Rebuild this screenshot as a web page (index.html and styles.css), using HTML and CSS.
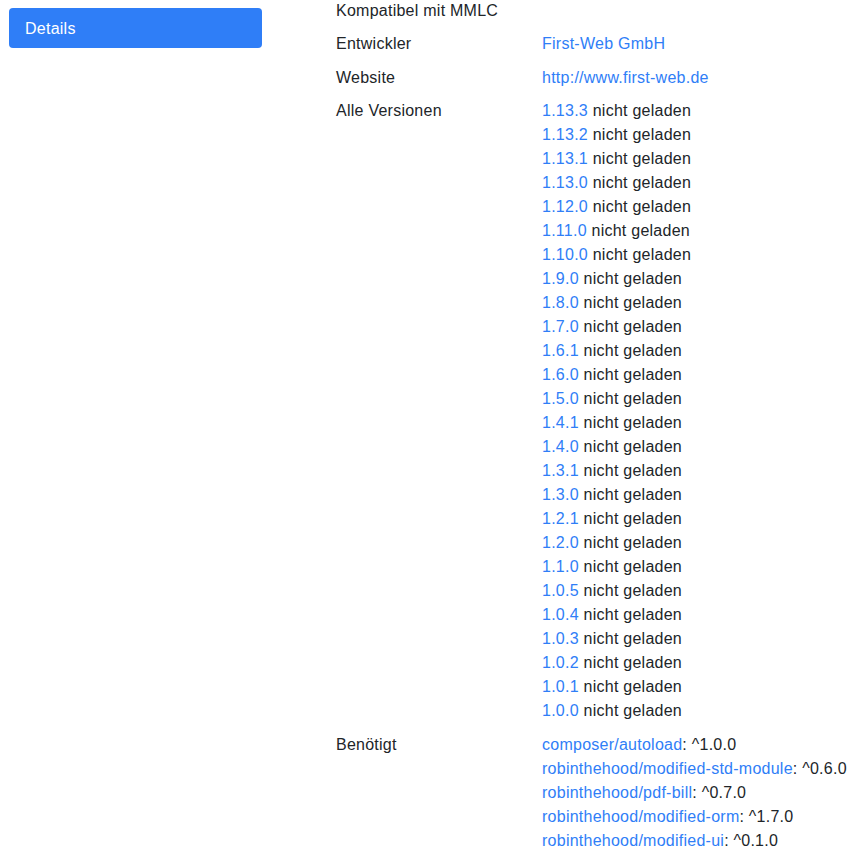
FILE: index.html
```
<!DOCTYPE html>
<html lang="de">
<head>
    <meta charset="UTF-8">
    <meta name="viewport" content="width=device-width, initial-scale=1.0">
    <title>Modul Details</title>
    <link rel="stylesheet" href="styles.css">
</head>
<body>
    <div class="page">
        <nav class="sidebar">
            <a href="#" class="nav-link active">Details</a>
        </nav>
        <div class="details">
            <div class="detail-row">
                <div class="detail-label">Kompatibel mit MMLC</div>
                <div class="detail-value"></div>
            </div>
            <div class="detail-row">
                <div class="detail-label">Entwickler</div>
                <div class="detail-value"><a href="#">First-Web GmbH</a></div>
            </div>
            <div class="detail-row">
                <div class="detail-label">Website</div>
                <div class="detail-value"><a href="#">http://www.first-web.de</a></div>
            </div>
            <div class="detail-row">
                <div class="detail-label">Alle Versionen</div>
                <div class="detail-value">
                    <div><a href="#">1.13.3</a> nicht geladen</div>
                    <div><a href="#">1.13.2</a> nicht geladen</div>
                    <div><a href="#">1.13.1</a> nicht geladen</div>
                    <div><a href="#">1.13.0</a> nicht geladen</div>
                    <div><a href="#">1.12.0</a> nicht geladen</div>
                    <div><a href="#">1.11.0</a> nicht geladen</div>
                    <div><a href="#">1.10.0</a> nicht geladen</div>
                    <div><a href="#">1.9.0</a> nicht geladen</div>
                    <div><a href="#">1.8.0</a> nicht geladen</div>
                    <div><a href="#">1.7.0</a> nicht geladen</div>
                    <div><a href="#">1.6.1</a> nicht geladen</div>
                    <div><a href="#">1.6.0</a> nicht geladen</div>
                    <div><a href="#">1.5.0</a> nicht geladen</div>
                    <div><a href="#">1.4.1</a> nicht geladen</div>
                    <div><a href="#">1.4.0</a> nicht geladen</div>
                    <div><a href="#">1.3.1</a> nicht geladen</div>
                    <div><a href="#">1.3.0</a> nicht geladen</div>
                    <div><a href="#">1.2.1</a> nicht geladen</div>
                    <div><a href="#">1.2.0</a> nicht geladen</div>
                    <div><a href="#">1.1.0</a> nicht geladen</div>
                    <div><a href="#">1.0.5</a> nicht geladen</div>
                    <div><a href="#">1.0.4</a> nicht geladen</div>
                    <div><a href="#">1.0.3</a> nicht geladen</div>
                    <div><a href="#">1.0.2</a> nicht geladen</div>
                    <div><a href="#">1.0.1</a> nicht geladen</div>
                    <div><a href="#">1.0.0</a> nicht geladen</div>
                </div>
            </div>
            <div class="detail-row">
                <div class="detail-label">Benötigt</div>
                <div class="detail-value">
                    <div><a href="#">composer/autoload</a>: ^1.0.0</div>
                    <div><a href="#">robinthehood/modified-std-module</a>: ^0.6.0</div>
                    <div><a href="#">robinthehood/pdf-bill</a>: ^0.7.0</div>
                    <div><a href="#">robinthehood/modified-orm</a>: ^1.7.0</div>
                    <div><a href="#">robinthehood/modified-ui</a>: ^0.1.0</div>
                </div>
            </div>
        </div>
    </div>
</body>
</html>
```
FILE: styles.css
```
:root {
    --primary-color: #2f7ef7;
    --text-color: #212529;
}

* {
    margin: 0;
    padding: 0;
    box-sizing: border-box;
    font-family: 'Liberation Sans', Arial, sans-serif;
}

body {
    background: #ffffff;
    color: var(--text-color);
    font-size: 16px;
    line-height: 24px;
    letter-spacing: 0.25px;
    overflow: hidden;
}

.page {
    display: flex;
    align-items: flex-start;
    padding: 8px 9px;
}

.sidebar {
    width: 253px;
    flex-shrink: 0;
}

.nav-link {
    display: block;
    padding: 8.5px 16px 7.5px;
    border-radius: 4px;
    text-decoration: none;
}

.nav-link.active {
    background-color: var(--primary-color);
    color: #ffffff;
}

.details {
    margin-left: 74px;
    margin-top: -14px;
    white-space: nowrap;
}

.detail-row {
    display: grid;
    grid-template-columns: 206px 1fr;
    padding: 4.75px 0;
}

.detail-value a {
    color: var(--primary-color);
    text-decoration: none;
}
```
